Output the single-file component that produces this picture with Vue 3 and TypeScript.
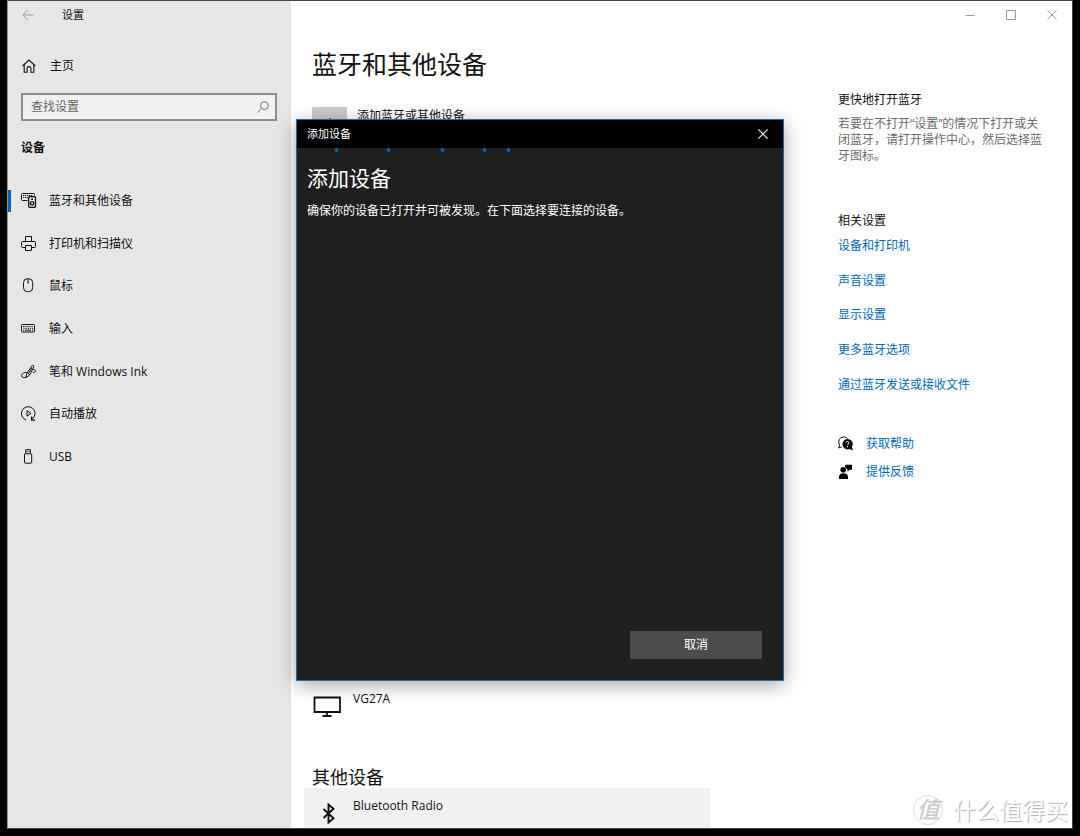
<script setup lang="ts">
import { ref } from 'vue'

interface NavItem {
  id: string
  label: string
}

const navItems: NavItem[] = [
  { id: 'bluetooth', label: '蓝牙和其他设备' },
  { id: 'printer', label: '打印机和扫描仪' },
  { id: 'mouse', label: '鼠标' },
  { id: 'typing', label: '输入' },
  { id: 'pen', label: '笔和 Windows Ink' },
  { id: 'autoplay', label: '自动播放' },
  { id: 'usb', label: 'USB' },
]

const relatedLinks: string[] = ['设备和打印机', '声音设置', '显示设置', '更多蓝牙选项', '通过蓝牙发送或接收文件']

const active = ref('bluetooth')
const query = ref('')
const dialogOpen = ref(true)
</script>

<template>
  <div class="screen">
    <div class="window">
      <nav class="sidebar" aria-label="设置">
        <div class="caption">
          <button class="back" type="button" aria-label="返回">
            <svg width="12" height="12" viewBox="0 0 12 12" fill="none" stroke="currentColor"><path d="M11.5 6H1M5.5 1.2 .8 6l4.7 4.8" /></svg>
          </button>
          <span>设置</span>
        </div>

        <a class="home" href="#home">
          <svg width="14" height="14" viewBox="0 0 14 14" fill="none" stroke="currentColor" stroke-width="1.1"><path d="M.6 7 7 1l6.4 6M2.2 5.8v7.4h2.9V9.3c0-2.2 3.8-2.2 3.8 0v3.9h2.9V5.8" /></svg>
          <span>主页</span>
        </a>

        <label class="search">
          <input v-model="query" type="text" placeholder="查找设置" aria-label="查找设置" />
          <svg width="12" height="12" viewBox="0 0 12 12" fill="none" stroke="currentColor"><circle cx="7.4" cy="4.6" r="3.9" /><path d="M4.6 7.4.5 11.5" /></svg>
        </label>

        <h2 class="group">设备</h2>

        <ul class="nav">
          <li v-for="item in navItems" :key="item.id">
            <a :href="'#' + item.id" :class="{ active: active === item.id }" @click.prevent="active = item.id">
              <svg class="nav-icon" width="16" height="16" viewBox="0 0 16 16" fill="none" stroke="currentColor">
                <g v-if="item.id === 'bluetooth'">
                  <path d="M6.500 7.500h-5a1 1 0 0 1-1-1v-5a1 1 0 0 1 1-1h11a1 1 0 0 1 1 1v1" />
                  <path d="M2 2.500h10M2 4.500h5" stroke-width="1.100" stroke-dasharray="1.300 .7" />
                  <rect x="7.700" y="3.700" width="6.800" height="10.600" rx="1" stroke-width="1.300" />
                  <circle cx="11.100" cy="10.300" r="1.700" stroke-width="1.300" />
                  <path d="M10.200 6.200h1.800" stroke-width="1.600" />
                </g>
                <g v-else-if="item.id === 'printer'">
                  <path d="M4.500 5.500V.5h6v5M4 11.500H1.500a1 1 0 0 1-1-1v-4a1 1 0 0 1 1-1h12a1 1 0 0 1 1 1v4a1 1 0 0 1-1 1H11" />
                  <path d="M4.500 9.500h6v5h-6z" />
                </g>
                <g v-else-if="item.id === 'mouse'">
                  <rect x="2.500" y=".7" width="9.200" height="13" rx="4" />
                  <path d="M7.100.7v5" />
                </g>
                <g v-else-if="item.id === 'typing'">
                  <rect x=".5" y="3.500" width="13" height="7.500" rx=".8" />
                  <path d="M2 5.500h10.500M2.500 7.300h9.500" stroke-dasharray="1.200 .9" />
                  <path d="M2 9.200h1.200M4 9.200h6M11 9.200h1.200" />
                </g>
                <g v-else-if="item.id === 'pen'">
                  <path d="M5 13.600 5.600 9.800 10.800 2c.8-1.500 2.700-.4 2 .9L8.600 11 5 13.600M6.500 9.100l2.200 1.300M11 3.700 8 8.700" />
                  <path d="M6 8.600c-2.400-.9-5.600.8-5.400 3.200.2 2.300 3.200 2.200 4.400 1.400M11.300 5.800c1.600-.7 3.200-.1 3.200 1.200 0 1.100-1.200 1.600-2.600 1.300" />
                </g>
                <g v-else-if="item.id === 'autoplay'">
                  <path d="M5 13.900A6.800 6.800 0 1 1 11.600 12.700" />
                  <path d="M10.700 10.600v3.500h3.300" stroke-width="1.400" />
                  <path d="M6 4.700v5.400l4-2.700z" />
                </g>
                <g v-else>
                  <rect x="3.500" y="4.800" width="7.200" height="9.400" rx=".8" />
                  <path d="M4.800 4.700V.7h4.600v4M6 2.700h.9M7.700 2.700h.9" />
                </g>
              </svg>
              <span>{{ item.label }}</span>
            </a>
          </li>
        </ul>
      </nav>

      <div class="pane">
        <div class="controls">
          <button type="button" aria-label="最小化">
            <svg width="10" height="10" viewBox="0 0 10 10" fill="none" stroke="currentColor"><path d="M.5 5.500h9" /></svg>
          </button>
          <button type="button" aria-label="最大化">
            <svg width="10" height="10" viewBox="0 0 10 10" fill="none" stroke="currentColor"><path d="M.5.5h9v9h-9z" /></svg>
          </button>
          <button type="button" aria-label="关闭">
            <svg width="10" height="10" viewBox="0 0 10 10" fill="none" stroke="currentColor"><path d="m.5.5 9 9m0-9-9 9" /></svg>
          </button>
        </div>

        <div class="columns">
          <main class="content">
            <h1>蓝牙和其他设备</h1>
            <button class="add" type="button" @click="dialogOpen = true">
              <span class="add-tile">
                <svg width="14" height="14" viewBox="0 0 14 14" stroke="currentColor"><path d="M7 0v14M0 7h14" /></svg>
              </span>
              <span class="add-label">添加蓝牙或其他设备</span>
            </button>

            <section class="devices">
              <div class="device">
                <svg width="28" height="22" viewBox="0 0 28 22" fill="none" stroke="currentColor" stroke-width="1.800"><path d="M1.500 1.500h25.500v14.500h-25.500zM14 16v4M9.500 20h9" /></svg>
                <span>VG27A</span>
              </div>
              <h2>其他设备</h2>
              <div class="device shaded">
                <svg width="28" height="22" viewBox="0 0 28 22" fill="none" stroke="currentColor" stroke-width="1.900"><path d="m10.500 6 10 9.300-5 4.200V1.500l5 4.200-10 9.300" /></svg>
                <span>Bluetooth Radio</span>
              </div>
            </section>
          </main>

          <aside class="info">
            <h3>更快地打开蓝牙</h3>
            <p>若要在不打开“设置”的情况下打开或关闭蓝牙，请打开操作中心，然后选择蓝牙图标。</p>
            <h3>相关设置</h3>
            <ul class="links">
              <li v-for="link in relatedLinks" :key="link"><a href="#related">{{ link }}</a></li>
            </ul>
            <ul class="support">
              <li>
                <a href="#help">
                  <svg width="16" height="16" viewBox="0 0 16 16"><path d="M5.500.9a5 5 0 0 0-4 7.800L.8 12l3-1.200" fill="none" stroke="#000" /><path d="M5.500.9c1.800 0 3.200.6 4 1.800" fill="none" stroke="#000" /><path d="M9.600 3a5.200 5.200 0 1 0 2 10l3.200 1.500-.8-3.400A5.200 5.200 0 0 0 9.600 3z" /><path d="M8 6.700c.2-2 3.300-1.600 3 .1-.2 1-1.400 1-1.400 2.200M9.600 10v1.300" fill="none" stroke="#fff" /></svg>
                  <span>获取帮助</span>
                </a>
              </li>
              <li>
                <a href="#feedback">
                  <svg width="16" height="16" viewBox="0 0 16 16"><circle cx="5.200" cy="5.800" r="2.800" /><path d="M1 15v-2.200c0-4.600 9-4.600 9 0V15zM7.200.8H14v5h-2.200L9.400 7.600V5.200L7.200 3.600z" /></svg>
                  <span>提供反馈</span>
                </a>
              </li>
            </ul>
          </aside>
        </div>
      </div>

      <div class="watermark">
        <span class="seal">值</span>
        <span>什么值得买</span>
      </div>

      <div v-if="dialogOpen" class="overlay">
        <div class="dialog" role="dialog" aria-labelledby="dialog-title">
          <header>
            <span>添加设备</span>
            <button type="button" aria-label="关闭" @click="dialogOpen = false">
              <svg width="10" height="10" viewBox="0 0 10 10" fill="none" stroke="currentColor" stroke-width="1.100"><path d="m.4.4 9.200 9.200m0-9.200L.4 9.600" /></svg>
            </button>
          </header>
          <svg class="progress" width="486" height="4" viewBox="0 0 486 4" fill="#0067b8">
            <circle cx="39.500" cy="2" r="1.900" />
            <circle cx="91.500" cy="2" r="1.900" />
            <circle cx="145.500" cy="2" r="1.900" />
            <circle cx="187.500" cy="2" r="1.900" />
            <circle cx="211.500" cy="2" r="1.900" />
          </svg>
          <h2 id="dialog-title">添加设备</h2>
          <p>确保你的设备已打开并可被发现。在下面选择要连接的设备。</p>
          <footer>
            <button type="button" @click="dialogOpen = false">取消</button>
          </footer>
        </div>
      </div>
    </div>
  </div>
</template>

<style>
body {
  margin: 0;
  background: #000;
}
</style>

<style scoped>
* {
  box-sizing: border-box;
}

h1,
h2,
h3,
p,
ul {
  margin: 0;
  padding: 0;
  font-weight: 400;
}

ul {
  list-style: none;
}

a {
  color: inherit;
  text-decoration: none;
}

button {
  padding: 0;
  border: 0;
  background: none;
  color: inherit;
  font: inherit;
}

svg {
  display: block;
  flex: none;
}

.screen {
  height: 100vh;
  padding: 0 7px 7px;
  background: #000;
  color: #111;
  font-family: "Open Sans", "Noto Sans CJK SC", sans-serif;
  font-size: 12px;
  line-height: 16px;
}

.window {
  position: relative;
  display: flex;
  height: 100%;
  overflow: hidden;
  border: 1px solid #444;
  border-left-color: #999;
  background: #fff;
}

.sidebar {
  flex: none;
  width: 283px;
  background: #e6e6e6;
}

.caption {
  display: flex;
  align-items: center;
  height: 28px;
  padding-left: 14px;
  gap: 28px;
  font-size: 11px;
}

.back {
  color: #999;
}

.home {
  display: flex;
  align-items: center;
  gap: 14px;
  height: 24px;
  margin-top: 25px;
  padding-left: 14px;
}

.search {
  display: flex;
  align-items: center;
  height: 28px;
  margin: 15px 14px 0 13px;
  padding: 0 6px 0 8px;
  border: 2px solid #8c8c8c;
  background: #f0f0f0;
  color: #777;
}

.search input {
  flex: 1;
  min-width: 0;
  padding: 0;
  border: 0;
  outline: 0;
  background: none;
  color: #222;
  font: inherit;
}

.search input::placeholder {
  color: #666;
  opacity: 1;
}

.group {
  margin: 18px 0 0 13px;
  font-size: 12px;
  font-weight: 700;
  line-height: 18px;
}

.nav {
  display: grid;
  grid-auto-rows: 1fr;
  height: 298px;
  margin-top: 23px;
}

.nav li {
  display: flex;
  align-items: center;
}

.nav a {
  display: flex;
  align-items: center;
  flex: 1;
  gap: 12px;
  height: 22px;
  padding-left: 10px;
  border-left: 3px solid transparent;
}

.nav a.active {
  border-color: #0067b8;
}

.pane {
  display: flex;
  flex: 1;
  flex-direction: column;
  min-width: 0;
}

.controls {
  display: flex;
  flex: none;
  justify-content: flex-end;
  height: 28px;
  color: #999;
}

.controls button {
  display: grid;
  place-items: center;
  width: 41px;
}

.columns {
  display: flex;
  flex: 1;
  min-height: 0;
}

.content {
  flex: 1;
  min-width: 0;
  padding-left: 21px;
}

.content h1 {
  margin-top: 18px;
  font-size: 25px;
  line-height: 34px;
}

.add {
  display: flex;
  gap: 10px;
  margin-top: 26px;
}

.add-label {
  padding-top: 1px;
}

.add-tile {
  display: grid;
  place-items: center;
  width: 35px;
  height: 35px;
  background: #ccc;
}

.devices {
  margin-top: 549px;
}

.device {
  display: flex;
  gap: 12px;
  height: 48px;
  padding-left: 1px;
}

.device svg {
  margin-top: 5px;
}

.devices h2 {
  margin-top: 27px;
  font-size: 18px;
  line-height: 22px;
}

.shaded {
  width: 406px;
  height: 64px;
  margin-left: -8px;
  padding: 10px 0 0 9px;
  background: #f1f1f1;
}

.info {
  flex: none;
  width: 234px;
  padding: 63px 27px 0 0;
}

.info h3 {
  font-size: 12px;
}

.info p {
  margin: 8px 0 49px;
  color: #6b6b6b;
}

.links {
  display: grid;
  grid-auto-rows: 1fr;
  height: 173px;
  color: #0067b8;
}

.links li {
  display: flex;
  align-items: center;
}

.support {
  margin-top: 28px;
  color: #0067b8;
}

.support a {
  display: flex;
  align-items: center;
  gap: 12px;
  height: 28px;
}

.watermark {
  position: absolute;
  right: 4px;
  bottom: 2px;
  display: flex;
  align-items: center;
  gap: 10px;
  color: #fff;
  font-size: 23px;
  line-height: 32px;
  text-shadow: 1px 1px 1px #aaa;
}

.seal {
  width: 30px;
  height: 30px;
  border: 1px solid #ddd;
  border-radius: 50%;
  color: #ccc;
  font-style: italic;
  font-weight: 500;
  line-height: 26px;
  text-align: center;
  text-shadow: none;
}

.overlay {
  position: absolute;
  inset: 0;
  display: flex;
  align-items: flex-start;
  justify-content: center;
  padding-top: 118px;
}

.dialog {
  display: flex;
  flex-direction: column;
  width: 488px;
  min-height: 562px;
  border: 1px solid #1c6cb0;
  background: #1f1f1f;
  box-shadow: 0 4px 18px rgba(0, 0, 0, 0.35);
  color: #fff;
}

.dialog header {
  display: flex;
  align-items: center;
  justify-content: space-between;
  height: 28px;
  padding-left: 10px;
  background: #000;
  font-size: 11px;
}

.dialog header button {
  display: grid;
  place-items: center;
  width: 41px;
  height: 28px;
}

.dialog h2 {
  margin: 12px 10px 0;
  font-size: 21px;
  line-height: 28px;
}

.dialog p {
  margin: 11px 10px 0;
}

.dialog footer {
  display: flex;
  justify-content: flex-end;
  margin-top: auto;
  padding: 0 21px 21px;
}

.dialog footer button {
  width: 132px;
  height: 28px;
  background: #4c4c4c;
}
</style>
